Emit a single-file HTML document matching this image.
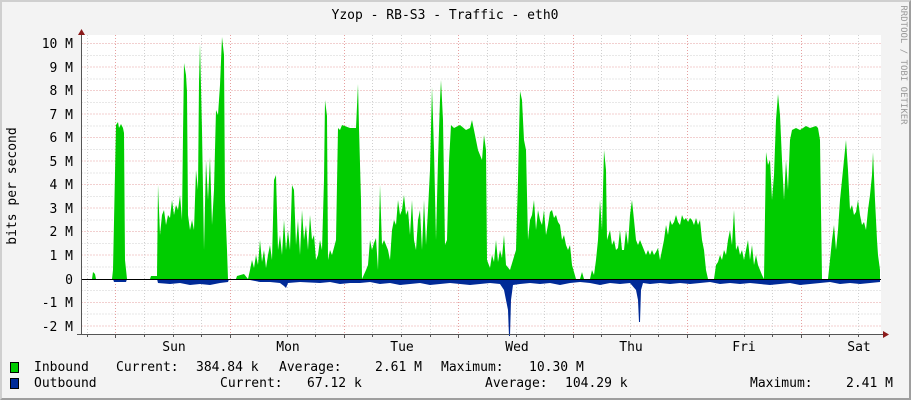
<!DOCTYPE html>
<html><head><meta charset="utf-8"><style>
html,body{margin:0;padding:0}
body{width:911px;height:400px;position:relative;background:#f3f3f3;overflow:hidden;font-family:"DejaVu Sans Mono","Liberation Mono",monospace;font-size:13px;color:#000}
.fr{position:absolute;left:0;top:0;border-top:2px solid #cfcfcf;border-left:2px solid #cfcfcf;border-right:2px solid #9e9e9e;border-bottom:2px solid #9e9e9e;box-sizing:border-box;width:911px;height:400px}
.t{position:absolute;white-space:pre;line-height:14px}
</style></head><body>
<div class="fr"></div>
<svg width="911" height="400" style="position:absolute;left:0;top:0" xmlns="http://www.w3.org/2000/svg">
<rect x="81" y="35" width="800" height="299" fill="#fff"/>
<g stroke="#d0d0d0" stroke-width="1" stroke-dasharray="1,2">
<path d="M81.5 43.5H881M81.5 67H881M81.5 90.5H881M81.5 114H881M81.5 137.5H881M81.5 161H881M81.5 184.5H881M81.5 208H881M81.5 231.5H881M81.5 255H881M81.5 302.5H881M81.5 326H881" stroke="#e6a0a0"/>
<path d="M81.5 55.5H881M81.5 79H881M81.5 102.5H881M81.5 126H881M81.5 149.5H881M81.5 173H881M81.5 196.5H881M81.5 220H881M81.5 243.5H881M81.5 267H881M81.5 290.5H881M81.5 314H881"/>
<path d="M87.5 35V334M144.5 35V334M173.5 35V334M201.5 35V334M258.5 35V334M287.5 35V334M315.5 35V334M372.5 35V334M401.5 35V334M430.5 35V334M487.5 35V334M516.5 35V334M544.5 35V334M601.5 35V334M630.5 35V334M658.5 35V334M715.5 35V334M744.5 35V334M772.5 35V334M829.5 35V334M858.5 35V334"/>
<path d="M115.5 35V334M230.5 35V334M344.5 35V334M458.5 35V334M573.5 35V334M687.5 35V334M801.5 35V334" stroke="#e6a0a0"/>
</g>
<polygon fill="#00cc00" points="81,279 92,279 93,272 95,274 96,279 112,279 113,270 116,125 118,122 119,128 121,124 123,128 124,133 125,260 127,279 150,279 151,276 157,276 158,185 160,235 162,215 164,210 166,225 168,215 170,218 172,200 174,215 176,205 178,210 180,195 182,220 183,135 184,63 186,75 187,92 188,215 190,230 192,220 194,230 196,170 198,190 199,82 200,44 202,130 204,250 206,160 208,200 210,157 212,225 214,190 216,110 218,115 220,85 222,37 224,55 225,200 227,250 228,279 236,279 237,276 244,274 248,279 250,270 252,260 254,268 256,255 258,265 260,240 262,262 264,250 266,268 268,255 270,245 272,260 274,180 276,175 278,250 280,235 282,255 284,220 286,250 288,230 290,250 292,185 294,190 296,245 298,220 300,255 302,210 304,240 306,225 308,250 310,215 312,240 314,235 316,260 318,255 320,240 322,250 324,180 325,100 327,116 328,260 330,250 332,255 336,240 338,128 340,130 342,125 350,128 356,128 358,84 359,128 361,200 362,279 366,270 368,265 370,240 372,250 374,243 376,238 378,270 380,185 382,245 384,240 386,245 388,250 390,260 392,230 394,220 396,225 398,200 400,215 402,210 404,195 406,215 408,210 410,235 412,200 414,240 416,250 418,220 420,210 422,250 424,200 426,245 428,210 430,170 432,87 434,150 436,240 438,160 440,100 441,80 443,120 445,245 447,240 449,162 451,125 454,128 460,125 466,130 470,128 472,120 474,130 478,150 482,160 484,135 486,150 487,260 490,268 492,255 494,262 496,240 498,262 500,250 502,258 504,235 506,265 510,270 516,250 518,180 520,91 522,100 524,140 526,150 528,240 530,220 532,215 534,200 536,230 538,210 540,220 542,225 544,210 546,235 548,225 550,212 552,210 554,218 556,215 558,222 560,225 562,240 564,235 566,245 568,250 570,245 572,265 574,272 576,279 580,279 582,272 584,279 590,279 592,270 594,275 596,260 598,240 600,200 602,230 604,150 606,170 607,240 610,230 612,245 614,240 616,250 618,248 620,230 622,250 624,250 626,230 628,245 630,215 632,200 634,220 636,240 638,245 640,240 642,245 644,250 646,255 648,250 650,255 652,250 654,255 656,252 658,248 660,260 662,250 664,240 666,225 668,235 670,220 672,225 674,222 676,215 678,222 680,225 682,215 684,220 686,218 688,222 690,218 692,220 694,225 696,218 698,225 700,220 702,240 704,250 706,270 708,279 714,279 716,265 718,262 720,255 722,260 724,250 726,255 728,240 730,230 732,245 734,210 736,250 738,245 740,255 742,250 744,260 746,250 748,240 750,260 752,245 754,265 756,255 758,265 760,270 762,275 764,279 766,152 768,165 770,160 772,200 774,175 776,120 778,94 780,115 782,160 784,200 786,160 788,190 790,140 792,130 796,128 800,130 806,126 810,128 816,126 818,128 820,140 822,279 828,279 830,260 832,240 834,225 836,250 838,230 840,200 842,180 844,160 846,140 848,170 850,210 852,205 854,215 856,212 858,200 860,215 862,225 864,222 866,230 868,210 870,195 872,175 873,152 875,200 877,240 878,255 880,270 880,279"/>
<polygon fill="#002a97" points="81,279 113,279 114,282 126,282 127,279 157,279 158,283 170,284 180,283 190,285 200,284 210,285 220,283 228,282 229,279 250,280 260,282 270,282 280,283 284,286 286,288 288,283 300,282 320,283 330,282 340,284 350,283 360,283 370,282 380,284 390,283 400,285 410,284 420,283 430,285 440,284 450,283 460,284 470,285 480,284 490,283 500,284 504,290 506,300 508,310 509,336 510,336 511,300 513,285 520,284 530,283 540,284 550,283 560,285 570,283 580,282 590,283 600,285 610,283 620,284 630,283 636,290 638,300 639,322 640,322 641,290 643,283 650,284 660,283 670,284 680,283 690,284 700,283 710,282 720,284 730,283 740,284 750,283 760,284 770,285 780,284 790,283 800,285 810,284 820,283 830,282 840,284 850,283 860,284 870,283 880,282 880,279"/>
<path d="M81 279.5H881" stroke="#000" stroke-width="1"/>
<path d="M81.5 34V334M77 334.5H883" stroke="#555" stroke-width="1"/>
<polygon points="78,35 81.5,29 85,35" fill="#8b1a1a"/>
<polygon points="883,331 889,334.5 883,338" fill="#8b1a1a"/>
<g stroke="#555"><path d="M87.5 334V337M115.5 334V338M144.5 334V337M173.5 334V337M201.5 334V337M230.5 334V338M258.5 334V337M287.5 334V337M315.5 334V337M344.5 334V338M372.5 334V337M401.5 334V337M430.5 334V337M458.5 334V338M487.5 334V337M516.5 334V337M544.5 334V337M573.5 334V338M601.5 334V337M630.5 334V337M658.5 334V337M687.5 334V338M715.5 334V337M744.5 334V337M772.5 334V337M801.5 334V338M829.5 334V337M858.5 334V337"/></g>
<g font-family="DejaVu Sans Mono, Liberation Mono, monospace" font-size="13" text-anchor="end" fill="#000">
<text x="73" y="48">10 M</text><text x="73" y="72">9 M</text><text x="73" y="95">8 M</text><text x="73" y="119">7 M</text><text x="73" y="142">6 M</text><text x="73" y="166">5 M</text><text x="73" y="189">4 M</text><text x="73" y="213">3 M</text><text x="73" y="236">2 M</text><text x="73" y="260">1 M</text><text x="73" y="284">0</text><text x="73" y="307">-1 M</text><text x="73" y="331">-2 M</text>
</g>
<g font-family="DejaVu Sans Mono, Liberation Mono, monospace" font-size="13" text-anchor="middle">
<text x="174" y="351">Sun</text><text x="288" y="351">Mon</text><text x="402" y="351">Tue</text><text x="517" y="351">Wed</text><text x="631" y="351">Thu</text><text x="744" y="351">Fri</text><text x="859" y="351">Sat</text>
<text x="445" y="19">Yzop - RB-S3 - Traffic - eth0</text>
<text transform="translate(16,186) rotate(-90)">bits per second</text>
<text transform="translate(901,65) rotate(90)" font-size="9" fill="#999">RRDTOOL / TOBI OETIKER</text>
</g>
<rect x="10.5" y="362.5" width="8" height="10" fill="#00cc00" stroke="#000"/>
<rect x="10.5" y="378.5" width="8" height="10" fill="#002a97" stroke="#000"/>
</svg>
<div class="t" style="left:34px;top:361px">Inbound</div>
<div class="t" style="left:116px;top:361px">Current:</div>
<div class="t" style="left:196px;top:361px">384.84 k</div>
<div class="t" style="left:279px;top:361px">Average:</div>
<div class="t" style="left:375px;top:361px">2.61 M</div>
<div class="t" style="left:441px;top:361px">Maximum:</div>
<div class="t" style="left:529px;top:361px">10.30 M</div>
<div class="t" style="left:34px;top:377px">Outbound</div>
<div class="t" style="left:220px;top:377px">Current:</div>
<div class="t" style="left:307px;top:377px">67.12 k</div>
<div class="t" style="left:485px;top:377px">Average:</div>
<div class="t" style="left:565px;top:377px">104.29 k</div>
<div class="t" style="left:750px;top:377px">Maximum:</div>
<div class="t" style="left:846px;top:377px">2.41 M</div>
</body></html>
